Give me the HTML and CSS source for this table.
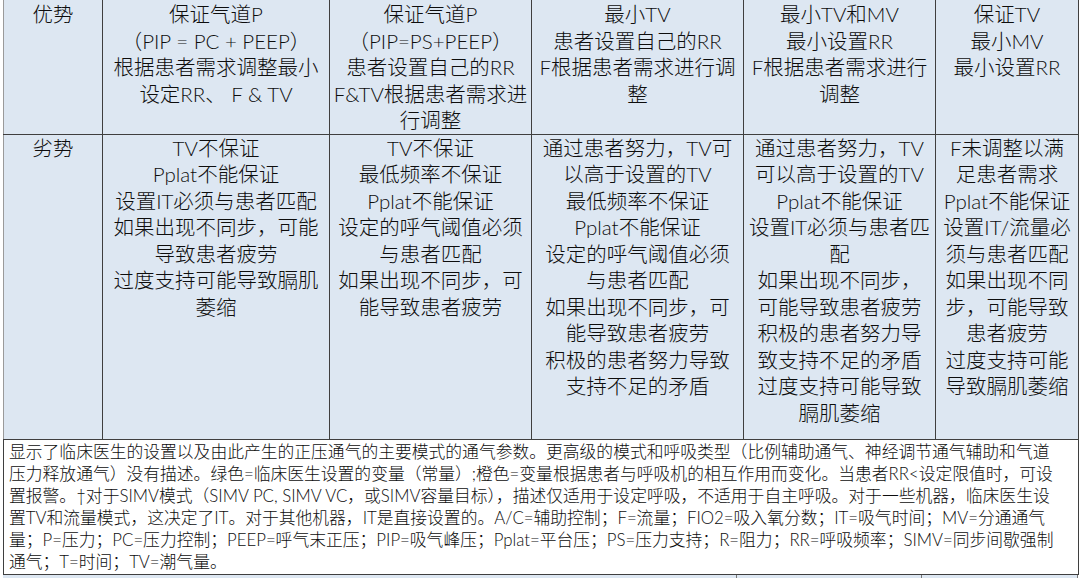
FILE: index.html
```html
<!DOCTYPE html>
<html lang="zh-CN">
<head>
<meta charset="utf-8">
<title>通气模式比较</title>
<link rel="stylesheet" href="styles.css">
</head>
<body>
<div class="page">
<table class="modes">
  <colgroup>
    <col class="c1"><col class="c2"><col class="c3"><col class="c4"><col class="c5"><col class="c6">
  </colgroup>
  <tr class="row-pro">
    <td class="first"><span>优势</span></td>
    <td><span>保证气道P</span><span>（PIP = PC + PEEP）</span><span>根据患者需求调整最小</span><span>设定RR、 F &amp; TV</span></td>
    <td><span>保证气道P</span><span>（PIP=PS+PEEP）</span><span>患者设置自己的RR</span><span>F&amp;TV根据患者需求进</span><span>行调整</span></td>
    <td><span>最小TV</span><span>患者设置自己的RR</span><span>F根据患者需求进行调</span><span>整</span></td>
    <td><span>最小TV和MV</span><span>最小设置RR</span><span>F根据患者需求进行</span><span>调整</span></td>
    <td class="last"><span>保证TV</span><span>最小MV</span><span>最小设置RR</span></td>
  </tr>
  <tr class="row-con">
    <td class="first"><span>劣势</span></td>
    <td><span>TV不保证</span><span>Pplat不能保证</span><span>设置IT必须与患者匹配</span><span>如果出现不同步，可能</span><span>导致患者疲劳</span><span>过度支持可能导致膈肌</span><span>萎缩</span></td>
    <td><span>TV不保证</span><span>最低频率不保证</span><span>Pplat不能保证</span><span>设定的呼气阈值必须</span><span>与患者匹配</span><span>如果出现不同步，可</span><span>能导致患者疲劳</span></td>
    <td><span>通过患者努力，TV可</span><span>以高于设置的TV</span><span>最低频率不保证</span><span>Pplat不能保证</span><span>设定的呼气阈值必须</span><span>与患者匹配</span><span>如果出现不同步，可</span><span>能导致患者疲劳</span><span>积极的患者努力导致</span><span>支持不足的矛盾</span></td>
    <td><span>通过患者努力，TV</span><span>可以高于设置的TV</span><span>Pplat不能保证</span><span>设置IT必须与患者匹</span><span>配</span><span>如果出现不同步，</span><span>可能导致患者疲劳</span><span>积极的患者努力导</span><span>致支持不足的矛盾</span><span>过度支持可能导致</span><span>膈肌萎缩</span></td>
    <td class="last"><span>F未调整以满</span><span>足患者需求</span><span>Pplat不能保证</span><span>设置IT/流量必</span><span>须与患者匹配</span><span>如果出现不同</span><span>步，可能导致</span><span>患者疲劳</span><span>过度支持可能</span><span>导致膈肌萎缩</span></td>
  </tr>
  <tr class="row-note">
    <td colspan="6"><span>显示了临床医生的设置以及由此产生的正压通气的主要模式的通气参数。更高级的模式和呼吸类型（比例辅助通气、神经调节通气辅助和气道</span><span>压力释放通气）没有描述。绿色=临床医生设置的变量（常量）;橙色=变量根据患者与呼吸机的相互作用而变化。当患者RR&lt;设定限值时，可设</span><span>置报警。†对于SIMV模式（SIMV PC, SIMV VC，或SIMV容量目标），描述仅适用于设定呼吸，不适用于自主呼吸。对于一些机器，临床医生设</span><span>置TV和流量模式，这决定了IT。对于其他机器，IT是直接设置的。A/C=辅助控制；F=流量；FIO2=吸入氧分数；IT=吸气时间；MV=分通通气</span><span>量；P=压力；PC=压力控制；PEEP=呼气末正压；PIP=吸气峰压；Pplat=平台压；PS=压力支持；R=阻力；RR=呼吸频率；SIMV=同步间歇强制</span><span>通气；T=时间；TV=潮气量。</span></td>
  </tr>
</table>
<div class="next-table">
  <div class="nt-a"></div><div class="nt-b"></div><div class="nt-c"></div>
</div>
</div>
</body>
</html>
```

FILE: styles.css
```css
html, body {
  margin: 0;
  padding: 0;
  background: #ffffff;
}

body {
  width: 1080px;
  height: 578px;
  overflow: hidden;
  font-family: Lato, "Noto Sans CJK SC", "Noto Sans", sans-serif;
  font-weight: 300;
  color: #0d0d0d;
}

.page {
  padding-left: 3px;
}

.modes {
  border-collapse: collapse;
  table-layout: fixed;
  width: 1075px;
}

.c1 { width: 99px; }
.c2 { width: 227px; }
.c3 { width: 202px; }
.c4 { width: 212px; }
.c5 { width: 192px; }
.c6 { width: 143px; }

.modes td {
  background: #dde7f2;
  border: 1px solid #3f3f3f;
  vertical-align: top;
  text-align: center;
  font-size: 20.5px;
  line-height: 26.5px;
  padding: 0;
}

.modes td span {
  display: block;
  white-space: nowrap;
}

.modes td.first {
  border-left: 1px solid #9a9a9a;
}

.row-pro td {
  border-top: none;
  height: 129px;
  padding-top: 1px;
}

.row-con td {
  height: 304px;
  padding-top: 0;
}

.row-note td {
  background: #ffffff;
  text-align: left;
  font-size: 16.8px;
  line-height: 22px;
  padding: 1px 0 0 5px;
  height: 133px;
  border-left: 1px solid #3f3f3f;
}

.next-table {
  display: grid;
  grid-template-columns: 734px 185px 1fr;
  height: 4px;
  width: 1075px;
  background: #dde7f2;
}

.next-table div {
  border-right: 1px solid #777;
}
```
